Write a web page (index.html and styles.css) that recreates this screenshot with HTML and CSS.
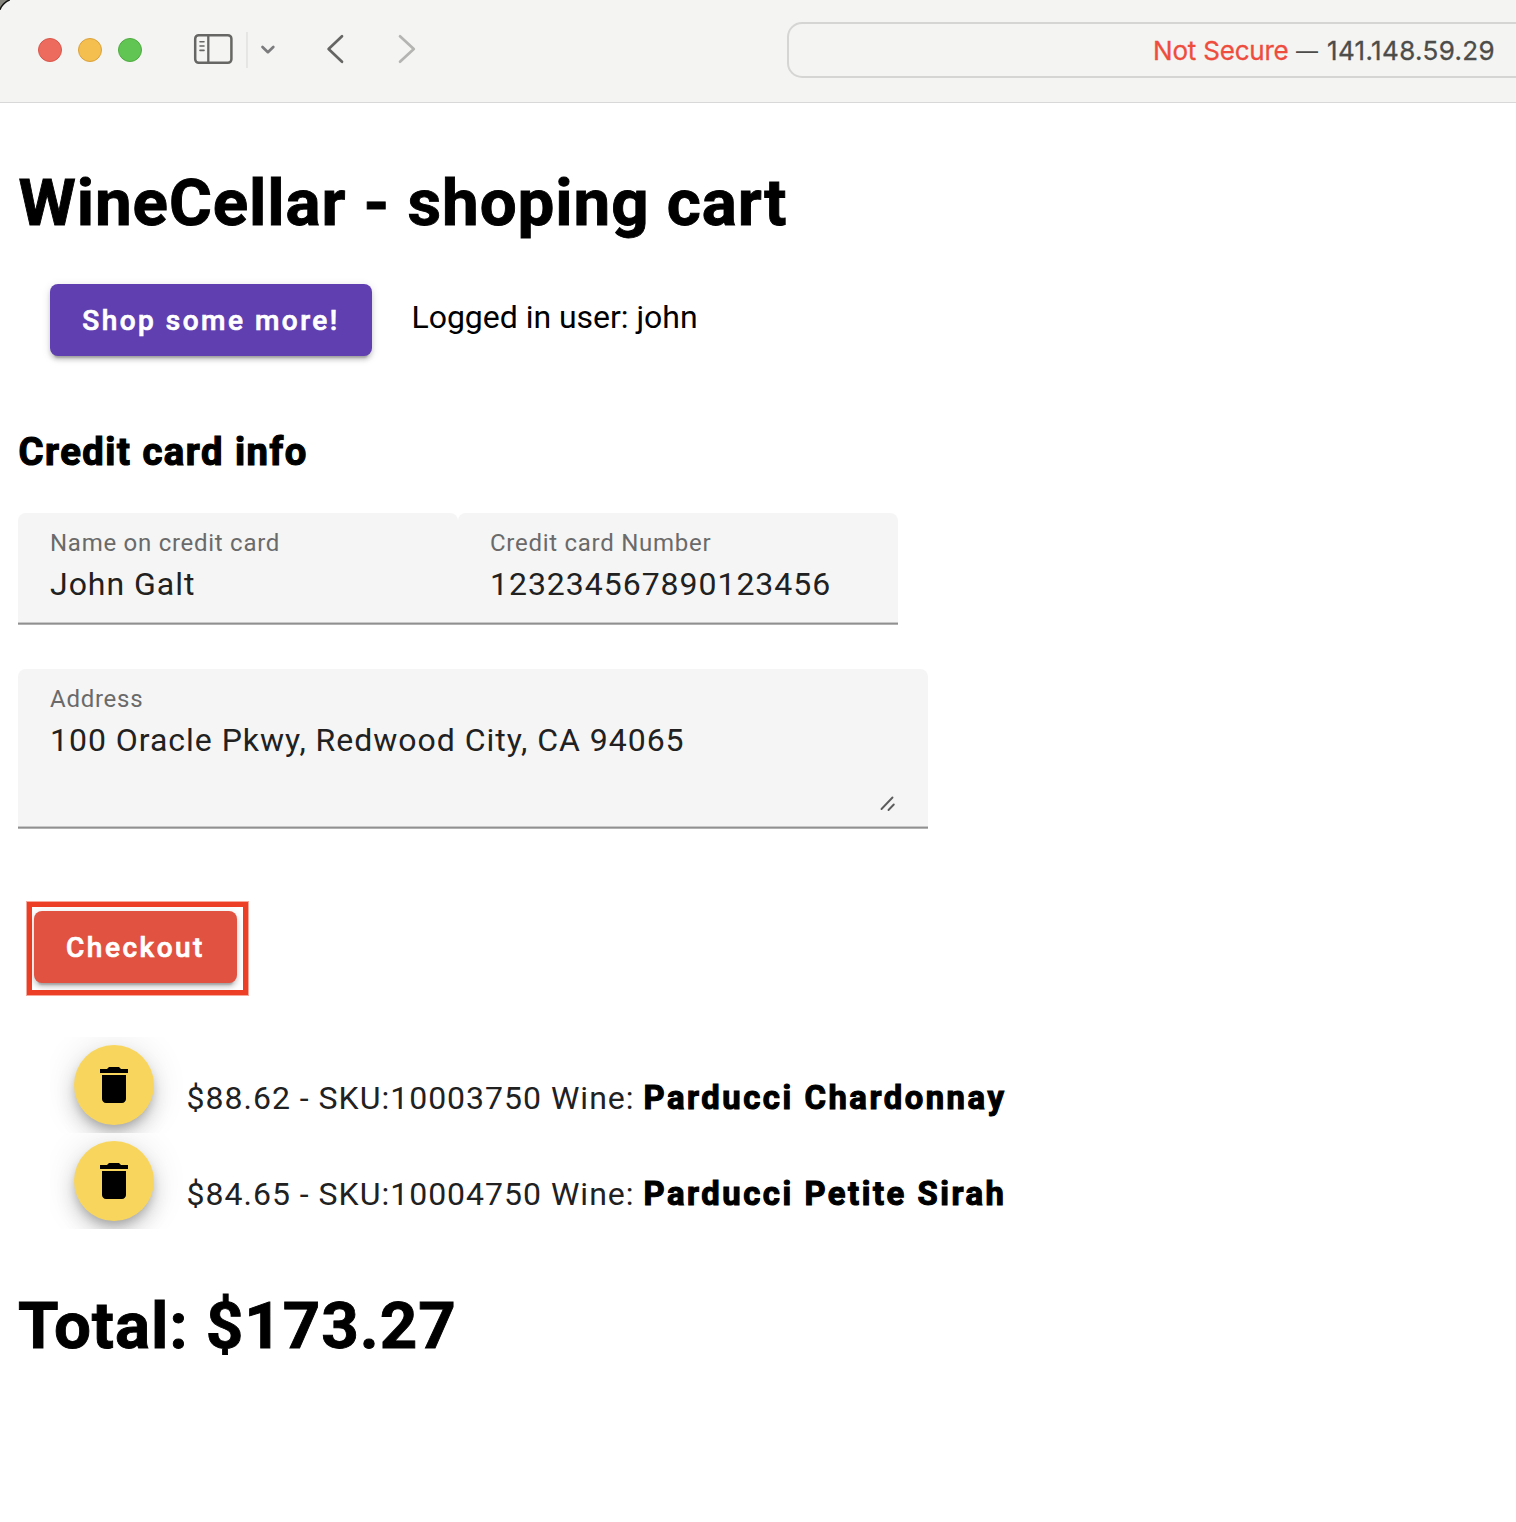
FILE: index.html
```html
<!DOCTYPE html>
<html lang="en">
<head>
<meta charset="utf-8">
<title>WineCellar</title>
<link rel="stylesheet" href="styles.css">
</head>
<body>
<header class="toolbar">
  <div class="lights">
    <span class="light light-close"></span>
    <span class="light light-min"></span>
    <span class="light light-max"></span>
  </div>
  <svg class="tool-icons" width="250" height="40" viewBox="190 30 250 40" fill="none" stroke-linecap="round" stroke-linejoin="round">
    <rect x="195.200" y="35.200" width="36.200" height="27.600" rx="3.500" stroke="#666664" stroke-width="2.500"/>
    <path d="M208.300 35.500v27" stroke="#666664" stroke-width="2.300"/>
    <path d="M200 41.700h4M200 46h4M200 50.400h4" stroke="#666664" stroke-width="1.600"/>
    <path d="M247 32v36" stroke="#e2e2e0" stroke-width="1.600" stroke-linecap="butt"/>
    <path d="M262.500 47l5.400 5.200 5.400-5.200" stroke="#7b7b7d" stroke-width="2.700"/>
    <path d="M342 36.300L328.600 49 342 61.700" stroke="#656563" stroke-width="2.700"/>
    <path d="M400 36.300L413.800 49 400 61.700" stroke="#b4b4b2" stroke-width="2.700"/>
  </svg>
  <div class="address-bar"><span class="insecure">Not Secure</span><span class="dash">—</span><span class="host">141.148.59.29</span></div>
</header>
<main class="page">
  <h1 class="title">WineCellar - shoping cart</h1>
  <div class="actions">
    <button class="btn btn-primary">Shop some more!</button>
    <span class="user">Logged in user: john</span>
  </div>
  <h3 class="section">Credit card info</h3>
  <div class="fields">
    <div class="field">
      <span class="label">Name on credit card</span>
      <span class="value">John Galt</span>
    </div>
    <div class="field">
      <span class="label">Credit card Number</span>
      <span class="value">123234567890123456</span>
    </div>
  </div>
  <div class="field field-area">
    <span class="label">Address</span>
    <span class="value">100 Oracle Pkwy, Redwood City, CA 94065</span>
    <svg class="grip" width="18" height="18" viewBox="0 0 18 18" stroke="#5c5c5c" stroke-width="1.900" stroke-linecap="round"><path d="M2.500 14L13.500 2.500M9.500 15L14.800 9.500"/></svg>
  </div>
  <div class="highlight"><button class="btn btn-warn">Checkout</button></div>
  <ul class="items">
    <li class="item">
      <button class="fab" aria-label="Delete"><svg width="48" height="48" viewBox="0 0 24 24"><path d="M6 19c0 1.100.9 2 2 2h8c1.100 0 2-.9 2-2V7H6v12zM19 4h-3.500l-1-1h-5l-1 1H5v2h14V4z"/></svg></button>
      <span class="item-text">$88.62 - SKU:10003750 Wine: </span><b class="wine">Parducci Chardonnay</b>
    </li>
    <li class="item">
      <button class="fab" aria-label="Delete"><svg width="48" height="48" viewBox="0 0 24 24"><path d="M6 19c0 1.100.9 2 2 2h8c1.100 0 2-.9 2-2V7H6v12zM19 4h-3.500l-1-1h-5l-1 1H5v2h14V4z"/></svg></button>
      <span class="item-text">$84.65 - SKU:10004750 Wine: </span><b class="wine">Parducci Petite Sirah</b>
    </li>
  </ul>
  <h1 class="total">Total: $173.27</h1>
</main>
</body>
</html>
```
FILE: styles.css
```css
* { box-sizing: border-box; }

body {
  margin: 0;
  width: 1516px;
  height: 1522px;
  overflow: hidden;
  background: #fff;
  color: #000;
  font-family: Roboto, "Liberation Sans", sans-serif;
}

h1, h3, ul { margin: 0; padding: 0; }
button { border: 0; padding: 0; font-family: inherit; }

/* Browser toolbar */
.toolbar {
  display: flex;
  height: 103px;
  padding-left: 38px;
  background: radial-gradient(circle at 16px 16px, #f4f4f2 16px, #111 17px, #111 17.500px, #85857e 18.500px) 0 0 / 10px 10px no-repeat, #f4f4f2;
  border-bottom: 1px solid #d8d8d8;
}
.lights { display: flex; gap: 16px; padding-top: 38px; }
.light { width: 24px; height: 24px; border-radius: 50%; border: 1px solid; }
.light-close { background: #ec6a5e; border-color: #d9564b; }
.light-min { background: #f4bf4f; border-color: #dba23c; }
.light-max { background: #61c554; border-color: #4fab40; }
.tool-icons { margin: 30px 0 0 48px; flex: none; }
.address-bar {
  display: flex;
  flex: none;
  width: 760px;
  height: 56px;
  margin: 22px 0 0 347px;
  padding-left: 364px;
  border: 2px solid #d5d5d3;
  border-radius: 15px;
  font: 26px/54px Inter, sans-serif;
  white-space: pre;
}
.insecure { width: 143px; color: #ee4d3e; letter-spacing: -.2px; -webkit-text-stroke: .3px #ee4d3e; }
.dash { width: 31px; color: #4c4c4a; font-size: 22px; }
.host { color: #4c4c4a; letter-spacing: .35px; -webkit-text-stroke: .3px #4c4c4a; }

/* Cart page */
.page { padding-left: 18px; }
.title, .total { font-size: 65.500px; line-height: 76px; font-weight: 700; letter-spacing: .920px; white-space: pre; -webkit-text-stroke: .9px #000; }
.title { margin-top: 62px; padding-left: .5px; }
.actions { display: flex; gap: 40px; margin-top: 43px; padding-left: 32px; }
.btn {
  display: block;
  height: 72px;
  border-radius: 8px;
  color: #fff;
  font-size: 28px;
  font-weight: 500;
  letter-spacing: 2.500px;
  -webkit-text-stroke: .7px #fff;
  box-shadow: 0 6px 2px -4px rgba(0,0,0,.2), 0 4px 4px rgba(0,0,0,.14), 0 2px 10px rgba(0,0,0,.12);
}
.btn-primary { width: 322px; background: #603fb0; }
.btn-warn { width: 203px; background: #e15241; }
.user { margin-left: -.5px; font-size: 32px; line-height: 66px; letter-spacing: -.03px; }
.section { margin-top: 74px; padding-left: .5px; font-size: 38.200px; line-height: 44px; font-weight: 700; letter-spacing: 1.520px; -webkit-text-stroke: 1.200px #000; }

.fields { display: flex; margin-top: 39px; }
.field {
  display: flex;
  flex-direction: column;
  width: 440px;
  height: 112px;
  padding: 15px 32px 0;
  border-radius: 8px 8px 0 0;
  background: linear-gradient(#c8c8c8 1px, #909090 1px 2px, #b2b2b2 2px) 0 100% / 100% 3px no-repeat, #f5f5f5;
}
.field-area { position: relative; width: 910px; height: 160px; margin-top: 44px; }
.label { color: #6a6a6a; font-size: 24px; line-height: 30px; letter-spacing: .730px; }
.value { color: #212121; font-size: 32px; line-height: 52px; letter-spacing: .970px; white-space: nowrap; }
.grip { position: absolute; right: 31px; bottom: 16px; }

.highlight {
  width: 221px;
  height: 93px;
  margin: 73px 0 0 9px;
  padding: 4px 0 0 2px;
  border: 5px solid #ed3f26;
  box-shadow: 0 0 0 1px rgba(237,63,38,.45);
}

.items { margin-top: 42px; padding-left: 32px; list-style: none; }
.item { display: flex; height: 96px; padding: 8px 0 0 24px; overflow: hidden; font-size: 32px; line-height: 106px; white-space: pre; }
.fab {
  display: grid;
  place-items: center;
  flex: none;
  width: 80px;
  height: 80px;
  margin-right: 32.500px;
  border-radius: 50%;
  background: #f8d65d;
  box-shadow: 0 6px 10px -2px rgba(0,0,0,.2), 0 12px 20px rgba(0,0,0,.14), 0 2px 36px rgba(0,0,0,.12);
}
.item-text { color: #212121; letter-spacing: 1px; }
.wine { font-size: 32.800px; font-weight: 700; letter-spacing: 2.540px; -webkit-text-stroke: 1.100px #000; }
.total { margin-top: 59px; }
```
